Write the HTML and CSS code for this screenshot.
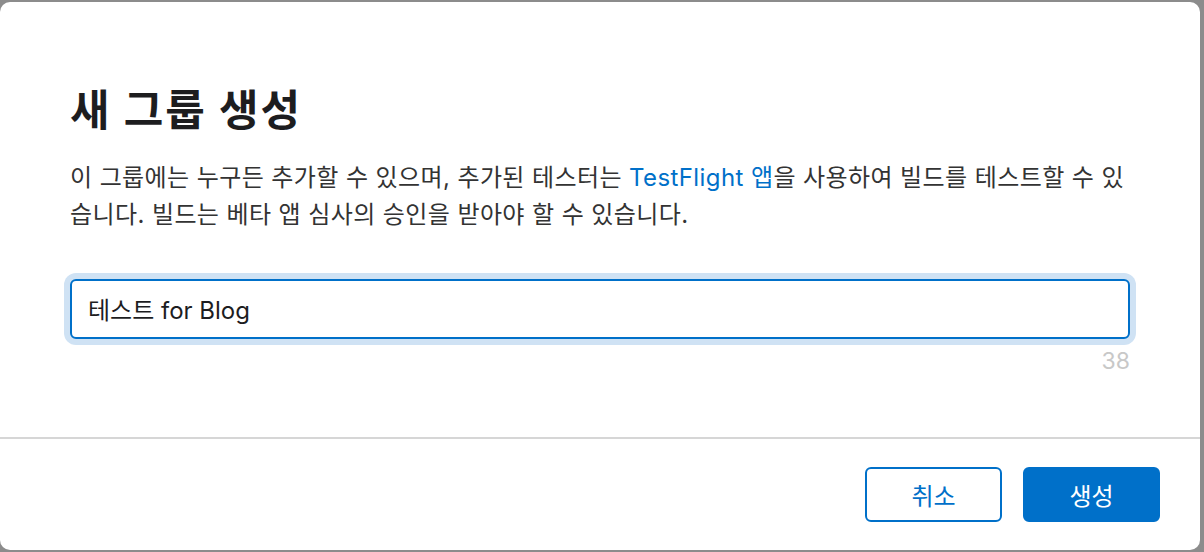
FILE: index.html
```html
<!DOCTYPE html>
<html lang="ko">
<head>
    <meta charset="UTF-8">
    <title>새 그룹 생성</title>
    <link rel="stylesheet" href="styles.css">
</head>
<body>
    <div class="dialog">
        <div class="dialog-body">
            <h1>새 그룹 생성</h1>
            <p class="desc">이 그룹에는 누구든 추가할 수 있으며, 추가된 테스터는 <a href="#">TestFlight 앱</a>을 사용하여 빌드를 테스트할 수 있습니다. 빌드는 베타 앱 심사의 승인을 받아야 할 수 있습니다.</p>
            <div class="field">
                <input type="text" value="테스트 for Blog">
            </div>
            <div class="counter">38</div>
        </div>
        <div class="dialog-footer">
            <button class="btn btn-secondary">취소</button>
            <button class="btn btn-primary">생성</button>
        </div>
    </div>
</body>
</html>
```

FILE: styles.css
```css
html, body {
    height: 100%;
}

body {
    margin: 0;
    padding: 2px 4px 2px 0;
    box-sizing: border-box;
    background-color: #8c8c8c;
    font-family: 'Inter', 'Noto Sans CJK KR', sans-serif;
    color: #1d1d1f;
}

.dialog {
    height: 548px;
    background-color: #fff;
    border-radius: 10px;
    display: flex;
    flex-direction: column;
}

.dialog-body {
    flex: 1;
    padding: 0 70px;
}

h1 {
    margin: 83px 0 0;
    font-size: 43px;
    font-weight: 700;
    letter-spacing: 2px;
    line-height: 1.2;
    color: #1d1d1f;
}

.desc {
    margin: 22px 0 0;
    font-size: 24px;
    letter-spacing: 0.4px;
    line-height: 37px;
    color: #333;
}

.desc a {
    color: #0070c9;
    text-decoration: none;
}

.field {
    margin-top: 46px;
}

.field input {
    width: 100%;
    height: 60px;
    box-sizing: border-box;
    padding: 0 16px;
    border: 2px solid #0070c9;
    border-radius: 6px;
    box-shadow: 0 0 0 6px #cfe2f4;
    font-family: inherit;
    font-size: 24px;
    color: #1d1d1f;
    outline: none;
}

.counter {
    margin-top: 8px;
    text-align: right;
    font-size: 23px;
    color: #c8c8c8;
}

.dialog-footer {
    border-top: 2px solid #d6d6d6;
    padding: 28px 40px 0;
    height: 113px;
    box-sizing: border-box;
    display: flex;
    justify-content: flex-end;
    gap: 21px;
}

.btn {
    width: 137px;
    height: 55px;
    border-radius: 6px;
    font-family: inherit;
    font-size: 24px;
    cursor: pointer;
}

.btn-secondary {
    background-color: #fff;
    border: 2px solid #0070c9;
    color: #0070c9;
}

.btn-primary {
    background-color: #0070c9;
    border: 2px solid #0070c9;
    color: #fff;
}
```
